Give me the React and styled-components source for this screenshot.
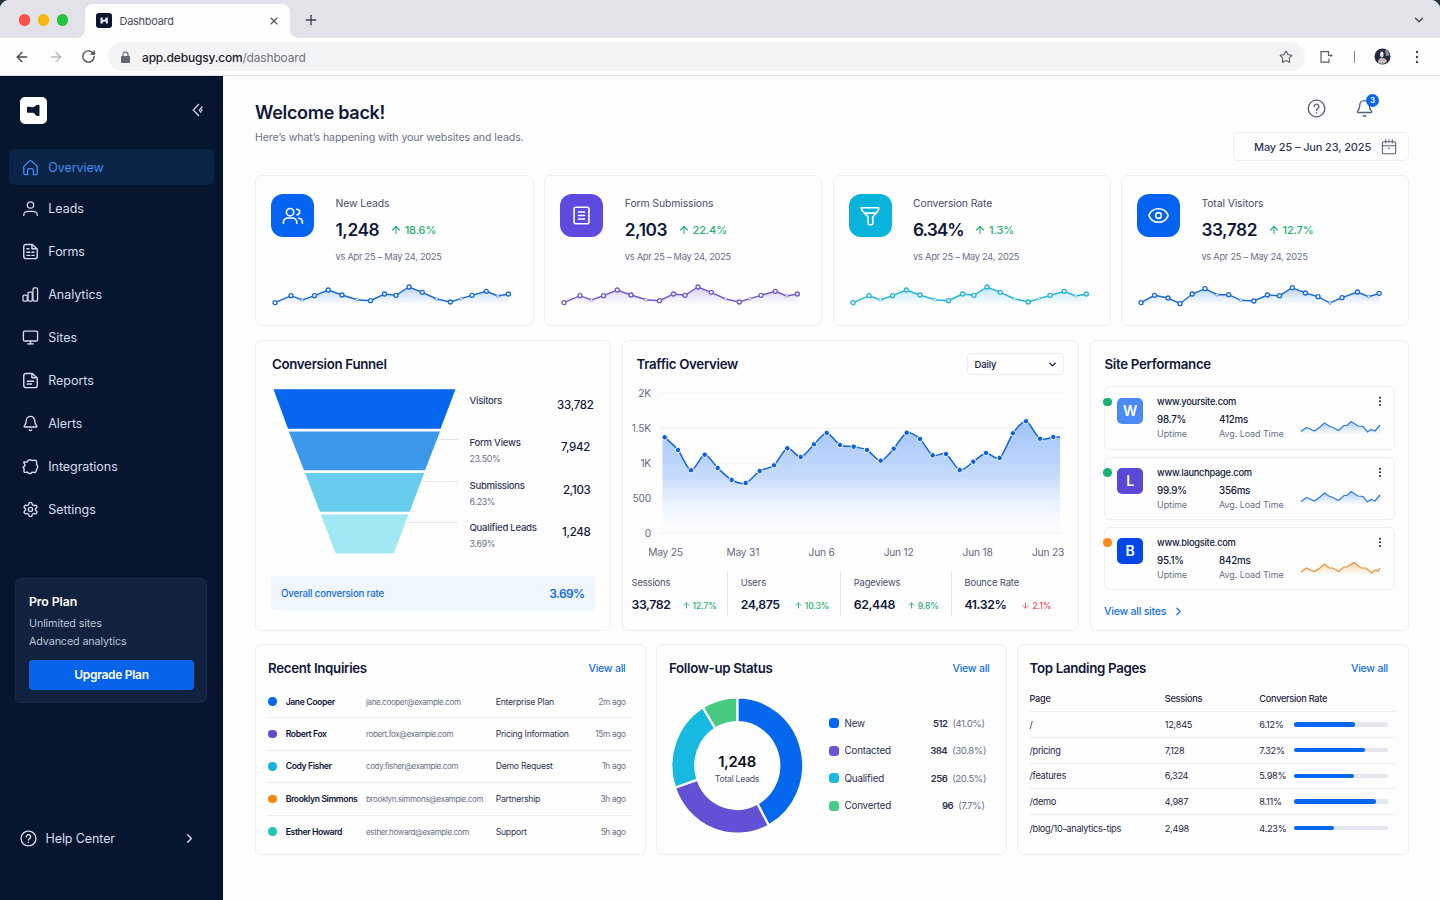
import styled, { createGlobalStyle } from "styled-components";
import {
  ArrowDown,
  ArrowLeft,
  ArrowRight,
  ArrowUp,
  Bell,
  ChevronDown,
  ChevronRight,
  Eye,
  Monitor,
  Plus,
  RotateCw,
  Settings,
  Star,
  X,
} from "lucide-react";

const blue = "#0566ee";
const violet = "#6656d8";
const cyan = "#18b9e0";
const ink = "#10183a";
const muted = "#6a7188";
const line = "#eceef3";

const GlobalStyle = createGlobalStyle`
  * {
    box-sizing: border-box;
  }
  body {
    margin: 0;
    background: #20303a;
    font-family: Inter, "Liberation Sans", sans-serif;
    color: ${ink};
    overflow: hidden;
  }
  svg {
    display: block;
    flex: none;
  }
`;

const Window = styled.div`
  width: 1440px;
  height: 900px;
  display: flex;
  flex-direction: column;
  border-radius: 9px 9px 0 0;
  overflow: hidden;
  background: #fefefe;
`;

/* browser chrome */

const TabStrip = styled.div`
  display: flex;
  align-items: center;
  height: 38px;
  flex: none;
  padding: 2px 14px 0 19px;
  background: #e2e3e8;
`;

const Lights = styled.div`
  display: flex;
  gap: 7.4px;
  width: 66px;
`;

const Light = styled.span`
  width: 11.4px;
  height: 11.4px;
  border-radius: 50%;
  background: ${(props) => props.$color};
`;

const Tab = styled.div`
  position: relative;
  display: flex;
  align-items: center;
  align-self: flex-end;
  width: 205px;
  height: 34px;
  padding: 0 10px 1px 11px;
  border-radius: 8px 8px 0 0;
  background: #fefefe;
  font-size: 11px;
  letter-spacing: -0.28px;
  color: #4b4f59;

  &::before,
  &::after {
    content: "";
    position: absolute;
    bottom: 0;
    width: 8px;
    height: 8px;
  }
  &::before {
    left: -8px;
    background: radial-gradient(circle at 0 0, transparent 7.5px, #fefefe 8px);
  }
  &::after {
    right: -8px;
    background: radial-gradient(circle at 100% 0, transparent 7.5px, #fefefe 8px);
  }
`;

const TabTitle = styled.span`
  flex: 1;
  margin-left: 7.5px;
`;

const NewTab = styled.div`
  flex: 1;
  padding: 0 0 0 13px;
  color: #3c404a;
`;

const Toolbar = styled.div`
  display: flex;
  align-items: center;
  height: 38px;
  flex: none;
  padding: 0 21px 0 14px;
  border-bottom: 1px solid #dfe0e4;
  color: #45484f;
`;

const NavButtons = styled.div`
  display: flex;
  gap: 17.5px;
  width: 94px;
`;

const Address = styled.div`
  display: flex;
  align-items: center;
  width: 1197px;
  height: 29px;
  padding: 1px 12px 0;
  border-radius: 15px;
  background: #f3f4f5;
  font-size: 12px;
  letter-spacing: -0.18px;
  color: #70737b;

  b {
    font-weight: 500;
    color: #1d2027;
  }
  span {
    flex: 1;
    margin-left: 11px;
  }
`;

const ToolIcons = styled.div`
  flex: 1;
  display: flex;
  align-items: center;
  padding-left: 14px;

  svg:last-child {
    margin-left: auto;
  }
`;

const Divider = styled.i`
  width: 1px;
  height: 12px;
  margin: 0 19px 0 20px;
  background: #85878e;
`;

/* sidebar */

const Body = styled.div`
  flex: 1;
  display: flex;
  min-height: 0;
`;

const Sidebar = styled.aside`
  width: 222.5px;
  flex: none;
  display: flex;
  flex-direction: column;
  padding: 20px 8.5px 43px 9px;
  background: #06162f;
  color: #d5deef;
`;

const SideHead = styled.div`
  display: flex;
  justify-content: space-between;
  align-items: center;
  height: 28px;
  margin-bottom: 25px;
  padding: 0 10px 0 11px;
`;

const NavItem = styled.div`
  display: flex;
  align-items: center;
  gap: 9.3px;
  height: 36px;
  margin-bottom: ${(props) => (props.$active ? 5.8 : 6.9)}px;
  padding-left: 13px;
  border-radius: 6px;
  font-size: 12.5px;
  letter-spacing: -0.05px;
  background: ${(props) => (props.$active ? "#0a2447" : "none")};
  color: ${(props) => (props.$active ? "#3f8ff5" : "#d5deef")};
`;

const Plan = styled.div`
  width: 192px;
  height: 125px;
  margin: 43.7px 0 0 6px;
  padding: 14px 12px 0 13px;
  border: 1px solid #1a2b45;
  border-radius: 6px;
  background: #10223d;
  font-size: 10.8px;
  line-height: 18px;
  letter-spacing: -0.14px;
  color: #b9c4d9;

  h4 {
    margin: 0 0 5px;
    font-size: 12.3px;
    font-weight: 600;
    line-height: 17px;
    letter-spacing: -0.1px;
    color: #fff;
  }
`;

const Upgrade = styled.div`
  height: 30px;
  margin-top: 9px;
  border-radius: 4px;
  background: #0763ea;
  font-size: 12px;
  font-weight: 600;
  line-height: 30px;
  letter-spacing: -0.3px;
  text-align: center;
  color: #fff;
`;

const Help = styled.div`
  display: flex;
  align-items: center;
  gap: 8.5px;
  margin-top: auto;
  padding: 0 17px 10px 11px;
  font-size: 12.5px;
  letter-spacing: -0.1px;

  span {
    flex: 1;
  }
`;

/* page */

const Main = styled.main`
  flex: 1;
  padding: 20px 31px 0 32.5px;
`;

const PageHead = styled.header`
  display: flex;
  justify-content: space-between;
  height: 79px;

  h1 {
    margin: 5px 0 0;
    font-size: 18px;
    font-weight: 600;
    line-height: 24px;
    letter-spacing: -0.3px;
  }
  p {
    margin: 4.5px 0 0;
    font-size: 10.6px;
    line-height: 15px;
    letter-spacing: -0.09px;
    color: ${muted};
  }
`;

const HeadTools = styled.div`
  width: 176px;
`;

const HeadIcons = styled.div`
  display: flex;
  align-items: center;
  gap: 29.5px;
  height: 24px;
  margin-bottom: 12px;
  padding-left: 73.5px;
  color: #565e7a;
`;

const BellWrap = styled.div`
  position: relative;
`;

const Badge = styled.span`
  position: absolute;
  top: -5px;
  right: -5px;
  width: 13px;
  height: 13px;
  border-radius: 50%;
  background: ${blue};
  font-size: 8px;
  font-weight: 600;
  line-height: 13px;
  text-align: center;
  color: #fff;
`;

const DateBox = styled.div`
  display: flex;
  align-items: center;
  justify-content: space-between;
  height: 29px;
  padding: 0 11px 0 20px;
  border: 1px solid ${line};
  border-radius: 5px;
  font-size: 11px;
  font-weight: 500;
  letter-spacing: -0.13px;
  color: #303858;

  svg {
    color: #565e7a;
  }
`;

const Row = styled.section`
  display: grid;
  grid-template-columns: ${(props) => props.$cols};
  gap: ${(props) => props.$gap}px;
  height: ${(props) => props.$height}px;
  margin-bottom: ${(props) => props.$after || 0}px;
`;

const Card = styled.div`
  min-width: 0;
  padding: ${(props) => props.$pad || "0"};
  border: 1px solid ${line};
  border-radius: 7px;
  background: #fefefe;
`;

const Title = styled.h2`
  margin: 0 0 0 ${(props) => props.$indent || 0}px;
  font-size: 13.3px;
  font-weight: 600;
  line-height: 18px;
  letter-spacing: -0.32px;
  white-space: nowrap;
`;

const CardHead = styled.div`
  display: flex;
  justify-content: space-between;
  align-items: center;
  height: 22px;
  margin-bottom: ${(props) => props.$after || 0}px;
  padding-right: ${(props) => props.$right || 0}px;
`;

const LinkText = styled.span`
  font-size: 10.5px;
  font-weight: 500;
  letter-spacing: -0.22px;
  color: #1670ee;
`;

/* stat cards */

const StatTop = styled.div`
  display: flex;
  gap: 21.5px;
  margin-bottom: 16px;
`;

const Tile = styled.div`
  display: grid;
  place-items: center;
  width: 43px;
  height: 43px;
  border-radius: 12px;
  background: ${(props) => props.$color};
  color: #fff;
`;

const StatText = styled.div`
  padding-top: 2px;
  font-size: 10.4px;
  line-height: 15px;
  letter-spacing: -0.1px;
  color: #454d6b;

  small {
    display: block;
    font-size: 9.3px;
    line-height: 14px;
    letter-spacing: -0.28px;
    color: ${muted};
  }
`;

const StatValue = styled.div`
  display: flex;
  align-items: center;
  height: 24px;
  margin: 6px 0 9px;
  font-size: 17.3px;
  font-weight: 600;
  letter-spacing: ${(props) => (props.$tight ? -1 : -0.45)}px;
  color: ${ink};
`;

const Change = styled.span`
  display: flex;
  align-items: center;
  gap: ${(props) => (props.$big ? 3 : 2)}px;
  margin-left: ${(props) => props.$left}px;
  padding-top: 2px;
  font-size: ${(props) => (props.$big ? 11 : 8.6)}px;
  font-weight: 500;
  letter-spacing: -0.12px;
  color: ${(props) => (props.$down ? "#ee4f55" : "#22b06d")};
`;

/* funnel */

const FunnelBody = styled.div`
  display: flex;
  height: 201px;
  padding-top: 14px;
`;

const Steps = styled.div`
  flex: 1;
  margin: 4.5px 0 0 9.5px;
`;

const Step = styled.div`
  display: flex;
  justify-content: space-between;
  height: 42.5px;
  padding-right: ${(props) => props.$right}px;
  font-size: 9.6px;
  font-weight: 500;
  line-height: 14px;
  letter-spacing: -0.28px;
  color: #333b5b;

  small {
    display: block;
    margin-top: 2px;
    font-size: 8.8px;
    font-weight: 400;
    color: ${muted};
  }
  strong {
    padding-top: 4px;
    font-size: 11.5px;
    font-weight: 500;
    letter-spacing: -0.3px;
    color: ${ink};
  }
`;

const Overall = styled.div`
  display: flex;
  align-items: center;
  justify-content: space-between;
  height: 34px;
  padding: 0 10px;
  border-radius: 4px;
  background: #eff6fe;
  font-size: 9.7px;
  font-weight: 500;
  letter-spacing: -0.18px;
  color: #176ce4;

  strong {
    font-size: 12px;
    font-weight: 600;
    letter-spacing: -0.6px;
  }
`;

/* traffic */

const Select = styled.div`
  display: flex;
  align-items: center;
  justify-content: space-between;
  width: 97px;
  height: 22px;
  padding: 0 5px 0 7px;
  border: 1px solid ${line};
  border-radius: 4px;
  font-size: 9.5px;
  font-weight: 500;
  letter-spacing: -0.15px;
`;

const ChartBox = styled.div`
  height: 197px;
  padding-top: 9.5px;
`;

const ChartText = styled.text`
  font-size: 10.2px;
  letter-spacing: -0.2px;
  fill: #646b82;
  text-anchor: ${(props) => props.$anchor};
`;

const Totals = styled.div`
  display: grid;
  grid-template-columns: 95.7px 113px 110.7px 1fr;
  height: 44px;
`;

const Total = styled.div`
  padding: 4px 0 0 ${(props) => (props.$first ? 0 : 12.5)}px;
  border-left: ${(props) => (props.$first ? "0" : "1px solid #e3e5ec")};
  font-size: 9.4px;
  line-height: 14px;
  letter-spacing: -0.12px;
  color: #454d6b;

  div {
    display: flex;
    align-items: center;
    height: 22px;
    margin-top: 3.5px;
  }
  strong {
    width: ${(props) => props.$value}px;
    font-size: 12.3px;
    font-weight: 600;
    letter-spacing: -0.4px;
    color: ${ink};
  }
`;

/* sites */

const Site = styled.div`
  display: flex;
  width: 291px;
  height: 63.4px;
  margin-bottom: 6.9px;
  padding-top: 9px;
  border: 1px solid ${line};
  border-radius: 6px;
`;

const Status = styled.i`
  width: 8.6px;
  height: 8.6px;
  margin: 1.5px 5.5px 0 -2px;
  border-radius: 50%;
  flex: none;
  background: ${(props) => props.$color};
`;

const Letter = styled.div`
  width: 26px;
  height: 26px;
  margin: 1.5px 14px 0 0;
  border-radius: 5px;
  background: ${(props) => props.$color};
  font-size: 14px;
  font-weight: 600;
  line-height: 26px;
  text-align: center;
  color: #fff;
`;

const SiteText = styled.div`
  width: 143px;
  margin-top: -1px;
  font-size: 9.3px;
  font-weight: 500;
  line-height: 13px;
  letter-spacing: -0.26px;

  dl {
    display: grid;
    grid-template-columns: 62px 1fr;
    margin: 5px 0 0;
    line-height: 14px;
  }
  dt {
    font-size: 9.8px;
  }
  dd {
    margin: 0;
    font-size: 9px;
    font-weight: 400;
    letter-spacing: -0.1px;
    white-space: nowrap;
    color: ${muted};
  }
`;

const SiteEnd = styled.div`
  display: flex;
  flex-direction: column;
  align-items: flex-end;
  gap: 12.5px;
`;

const AllSites = styled(LinkText)`
  display: flex;
  align-items: center;
  gap: 6px;
  padding-top: 8px;
`;

/* inquiries */

const Inquiry = styled.div`
  display: grid;
  grid-template-columns: 17.7px 80.3px 129.7px 84px 46px;
  align-items: center;
  height: 32.4px;
  border-bottom: ${(props) => (props.$last ? "0" : `1px solid ${line}`)};
  font-size: 8.7px;
  letter-spacing: -0.26px;
  white-space: nowrap;
  color: #2d3452;

  i {
    width: 8.6px;
    height: 8.6px;
    border-radius: 50%;
    background: ${(props) => props.$color};
  }
  b {
    font-weight: 600;
    letter-spacing: -0.42px;
    color: ${ink};
  }
  em {
    font-style: normal;
    font-size: 8px;
    letter-spacing: -0.37px;
    color: ${muted};
  }
  em:last-child {
    font-size: 8.4px;
    text-align: right;
  }
`;

/* follow-up */

const FollowBody = styled.div`
  display: flex;
  align-items: center;
  height: 154px;
  padding-top: 2px;
`;

const Donut = styled.div`
  display: grid;
  width: 131px;
  height: 135px;
  margin: 17px 26px 0 3px;

  > * {
    grid-area: 1 / 1;
  }
`;

const DonutLabel = styled.div`
  align-self: center;
  padding-top: 7px;
  font-size: 8.8px;
  line-height: 14px;
  letter-spacing: -0.32px;
  text-align: center;
  color: #4f5672;

  strong {
    display: block;
    font-size: 14.8px;
    font-weight: 600;
    line-height: 20px;
    color: #0b0f20;
  }
`;

const Legend = styled.div`
  flex: 1;
  padding-top: 15px;
`;

const LegendItem = styled.div`
  display: flex;
  align-items: center;
  height: 27.6px;
  padding-right: ${(props) => props.$right}px;
  font-size: 9.8px;
  letter-spacing: -0.2px;
  color: #2a3150;

  i {
    width: 10px;
    height: 10px;
    margin-right: 6px;
    border-radius: 3.5px;
    background: ${(props) => props.$color};
  }
  span {
    flex: 1;
  }
  b {
    font-size: 9.5px;
    font-weight: 600;
    letter-spacing: -0.5px;
  }
  em {
    margin-left: 5px;
    font-style: normal;
    font-size: 9.6px;
    letter-spacing: -0.4px;
    color: ${muted};
  }
`;

/* landing pages */

const PageRow = styled.div`
  display: grid;
  grid-template-columns: 135.3px 94.5px 34.5px 94px;
  align-items: center;
  height: ${(props) => (props.$head ? 27 : 25.8)}px;
  border-bottom: ${(props) => (props.$last ? "0" : `1px solid ${line}`)};
  font-size: 9.2px;
  font-weight: ${(props) => (props.$head ? 500 : 400)};
  letter-spacing: -0.28px;
  white-space: nowrap;
  color: #1e2644;
`;

const Track = styled.div`
  height: 4.6px;
  border-radius: 3px;
  background: #e5e7ec;
`;

const Fill = styled.div`
  height: 100%;
  border-radius: 3px;
  background: ${blue};
`;

function Icon({ size, width = 1.8, children }) {
  return (
    <svg
      width={size}
      height={size}
      viewBox="0 0 24 24"
      fill="none"
      stroke="currentColor"
      strokeWidth={width}
      strokeLinecap="round"
      strokeLinejoin="round"
    >
      {children}
    </svg>
  );
}

const HomeIcon = () => (
  <Icon size={17}>
    <path d="M2.500 10.500 10 3.300c1.300-1.200 2.700-1.200 4 0l7.500 7.200V20a2 2 0 0 1-2 2H16v-6.500a2 2 0 0 0-2-2h-4a2 2 0 0 0-2 2V22H4.500a2 2 0 0 1-2-2z" />
  </Icon>
);

const PersonIcon = () => (
  <Icon size={17}>
    <circle cx="12" cy="7" r="4.500" />
    <path d="M2.500 22v-.500c0-3.500 3-5.500 6-5.500h7c3 0 6 2 6 5.500v.5" />
  </Icon>
);

const DocIcon = ({ form }) => (
  <Icon size={17} width={2}>
    <path d="M14.500 2H5.500a3 3 0 0 0-3 3v14a3 3 0 0 0 3 3h13a3 3 0 0 0 3-3V8.500z" />
    <path d="M14 2.500V8h6" />
    {form ? (
      <path d="M7 8h3M7 13h4M14 13h3M7 17.500h4M14 17.500h3" />
    ) : (
      <path d="M7.500 13h9M7.500 17h6" />
    )}
  </Icon>
);

const BarsIcon = () => (
  <Icon size={17}>
    <rect x="1.500" y="13" width="6" height="8.500" rx="1.500" />
    <rect x="8.500" y="8.500" width="6" height="13" rx="1.500" />
    <rect x="15.500" y="2.500" width="6.500" height="19" rx="2" />
  </Icon>
);

const PieceIcon = () => (
  <Icon size={17} width={2}>
    <path d="M2.500 5.500c1.800.5 3.500.3 5.500-.5.500-2 1.800-3 3.500-2.500 1.200.3 1.800 1.200 3.500 1 2-.3 3.500-.8 5 .5 1.300 1.500.5 3.200.5 5 .3 1 1.700 1.500 1.700 3.500s-1.400 2.500-1.700 3.700c-.3 1.600 0 3-1.500 4-1.500.8-3-.2-4.500 0-1.300.3-1.600 1.800-3.500 1.800s-2.200-1.500-3.500-1.800c-1.500-.3-3.500.8-4.500-.7-.8-1.500.3-2.700 0-4-.2-1-1.500-1.500-1.500-3 1.800-.3 2.700-1.300 2.500-3-.2-1.300-1.500-2-1.500-4z" />
  </Icon>
);

const HelpIcon = ({ size, width }) => (
  <Icon size={size} width={width}>
    <circle cx="12" cy="12" r="10.500" />
    <path d="M9 9.500a3 3 0 1 1 4.500 2.600c-1 .6-1.500 1.100-1.500 2.100" />
    <path d="M12 17.300v.1" />
  </Icon>
);

const PeopleIcon = () => (
  <Icon size={22}>
    <circle cx="8.800" cy="7.800" r="4" />
    <path d="M1.500 20v-1c0-3 2.500-4.800 5-4.800h4.600c2.500 0 5 1.800 5 4.800v1" />
    <path d="M16 4.700a3 3 0 1 1 .5 6M18.300 14.500c2.400.3 4 2 4 4.500v1" />
  </Icon>
);

const SheetIcon = () => (
  <Icon size={21}>
    <rect x="3.500" y="2.500" width="17" height="19" rx="2" />
    <path d="M8.500 8h7M8.500 12h7M8.500 16h7" />
  </Icon>
);

const FunnelIcon = () => (
  <Icon size={22}>
    <path d="M2.500 3h19c.3 1.500-.5 3-1.500 4.200L15 13v7c0 1-.5 1.500-1.500 1.500h-2c-1 0-1.500-.5-1.500-1.500v-7L4.500 7.200C3.300 6 2.300 4.500 2.500 3z" />
    <path d="M6 8.800h13" />
  </Icon>
);

const CalendarIcon = () => (
  <Icon size={16} width={1.6}>
    <rect x="2" y="4" width="20" height="18" rx="2" />
    <path d="M2 10h20M7 1v5M12 1v3M17 1v5M11 14h2" />
  </Icon>
);

const LogoMark = ({ small }) =>
  small ? (
    <svg width="16" height="15" viewBox="0 0 16 15">
      <rect width="16" height="15" rx="3" fill="#0b1730" />
      <path d="M4.500 4.500h2v2.200h2.200l1.300-2.200h1.800v6H9.800V8.600H7.500l-1 1.900h-2z" fill="#e8edf6" />
    </svg>
  ) : (
    <svg width="27" height="27" viewBox="0 0 27 27">
      <rect width="27" height="27" rx="5" fill="#fff" />
      <path
        d="M8 9.700h1.500c1.300 0 1.500.6 2.700.6 1.300 0 1.900-.3 2.700-1l1.100-.9c.4-.4.800-.6 1.500-.6h1c.7 0 1 .3 1 1v9.200c0 .7-.3 1-1 1h-.8c-.7 0-1-.1-1.500-.6l-1.700-1.700c-.8-.8-1.200-.9-2.300-.9H8c-.7 0-1-.3-1-1v-4.100c0-.7.300-1 1-1z"
        fill="#0a1733"
      />
    </svg>
  );

const CollapseIcon = () => (
  <svg width="12" height="14" viewBox="0 0 12 14" fill="none" stroke="currentColor" strokeWidth="1.200">
    <path d="M7 1 1.200 7 7 13M10.500 3.500 7.300 7l1.800 2.800M9.800 6v2.500" />
  </svg>
);

const Kebab = () => (
  <svg width="4" height="11" viewBox="0 0 4 11" fill="currentColor">
    <circle cx="2" cy="1.700" r="1" />
    <circle cx="2" cy="5.300" r="1" />
    <circle cx="2" cy="8.900" r="1" />
  </svg>
);

const nav = [
  ["Overview", <HomeIcon />],
  ["Leads", <PersonIcon />],
  ["Forms", <DocIcon form />],
  ["Analytics", <BarsIcon />],
  ["Sites", <Monitor size={17} strokeWidth={1.9} />],
  ["Reports", <DocIcon />],
  ["Alerts", <Bell size={17} strokeWidth={1.9} />],
  ["Integrations", <PieceIcon />],
  ["Settings", <Settings size={17} strokeWidth={1.9} />],
];

// x, y, and 1 where the marker is a small faded one
const wave = [
  [4, 22.7], [20, 15.7], [31.4, 20, 1], [43.5, 15.7], [57.3, 10], [71, 15],
  [86, 19.7, 1], [99.5, 20.7], [113.5, 14], [125, 15.3], [138, 7], [151.3, 12.3],
  [165.6, 19, 1], [179.3, 22], [190, 18.7, 1], [201, 15.3], [215.3, 11.3],
  [226.7, 16, 1], [237.4, 14],
];

const visitorWave = [
  [4, 22.7], [17.5, 15.3], [31, 18], [43, 23.7], [55.2, 14], [68, 8.7],
  [80, 14.7, 1], [91.7, 14.7], [103.7, 20.3, 1], [116.9, 21], [130.4, 15],
  [142.5, 15.7], [155.3, 7.7], [168.4, 13], [181, 16.7], [193, 23, 1],
  [205, 17.7], [220.4, 12], [231.7, 16.7, 1], [242.2, 13.3],
];

const stats = [
  { label: "New Leads", value: "1,248", change: "18.6%", color: "#0463f0", icon: <PeopleIcon />, points: wave },
  { label: "Form Submissions", value: "2,103", change: "22.4%", color: "#5d4be0", stroke: "#7257d3", icon: <SheetIcon />, points: wave },
  { label: "Conversion Rate", value: "6.34%", change: "1.3%", color: "#08b4dc", stroke: "#1fb3dc", icon: <FunnelIcon />, points: wave, tight: true },
  { label: "Total Visitors", value: "33,782", change: "12.7%", color: "#0463f0", icon: <Eye size={23} strokeWidth={1.7} />, points: visitorWave },
];

const steps = [
  ["Visitors", "", "33,782", 1],
  ["Form Views", "23.50%", "7,942", 4.5],
  ["Submissions", "6.23%", "2,103", 4],
  ["Qualified Leads", "3.69%", "1,248", 4],
];

const traffic = [
  [8.7, 52.3], [22, 65], [35, 85.3], [48.7, 69.7], [61.7, 83], [75.7, 95], [89.7, 98],
  [103.7, 86], [118, 80.3], [131.3, 63.3], [144.7, 72], [158, 59.3], [170.7, 48],
  [184, 60], [197.7, 61.7], [211, 65], [224.7, 75.7], [237.7, 63.7], [250.7, 47.7],
  [264, 54], [276.7, 70.3], [290, 69], [303.7, 85], [317.3, 76.7], [330, 68],
  [343.7, 73], [357, 48.3], [370, 36.3], [384, 53.7], [397.3, 52], [404, 52],
];

const trafficDates = [
  ["May 25", 9.5],
  ["May 31", 86.8],
  ["Jun 6", 165.6],
  ["Jun 12", 242.6],
  ["Jun 18", 321.6],
  ["Jun 23", 392],
];

const totals = [
  ["Sessions", "33,782", "12.7%", 50],
  ["Users", "24,875", "10.3%", 53],
  ["Pageviews", "62,448", "9.8%", 53],
  ["Bounce Rate", "41.32%", "2.1%", 57],
];

const siteWave = "1,11.5 6.5,7.5 10,9 14.5,11 20,7 24.5,3 29,6 33,7.5 38.5,10.5 44,5.5 47,5.5 51,1.5 58,6 63,6.5 67.5,12 71,9.5 75,11 80,5";
const blogWave = "1,12 6.5,8 10,10 14.5,11.5 20,8 24.5,4 29,8 33,8 38.5,11.5 44,7 47,7 54,2.5 61,8 66,8 71.5,13 75,10 78,11 80,8";

const sites = [
  ["www.yoursite.com", "W", "98.7%", "412ms", "#4b8af5", "#17b179", siteWave, "#2a7ae6"],
  ["www.launchpage.com", "L", "99.9%", "356ms", "#5a49d6", "#17b179", siteWave, "#2a7ae6"],
  ["www.blogsite.com", "B", "95.1%", "842ms", "#0348e6", "#fd8917", blogWave, "#f08c2a"],
];

const inquiries = [
  ["Jane Cooper", "jane.cooper@example.com", "Enterprise Plan", "2m ago", blue],
  ["Robert Fox", "robert.fox@example.com", "Pricing Information", "15m ago", "#5f4bd4"],
  ["Cody Fisher", "cody.fisher@example.com", "Demo Request", "1h ago", "#12b3e2"],
  ["Brooklyn Simmons", "brooklyn.simmons@example.com", "Partnership", "3h ago", "#fb860f"],
  ["Esther Howard", "esther.howard@example.com", "Support", "5h ago", "#25c4b0"],
];

const statuses = [
  ["New", "512", "(41.0%)", blue, 9],
  ["Contacted", "384", "(30.8%)", violet, 7.5],
  ["Qualified", "256", "(20.5%)", cyan, 7.5],
  ["Converted", "96", "(7.7%)", "#45cb83", 9],
];

const pages = [
  ["/", "12,845", "6.12%", 65],
  ["/pricing", "7,128", "7.32%", 76],
  ["/features", "6,324", "5.98%", 64],
  ["/demo", "4,987", "8.11%", 87],
  ["/blog/10-analytics-tips", "2,498", "4.23%", 43],
];

function smooth(points) {
  let d = `M${points[0][0]} ${points[0][1]}`;
  for (let i = 0; i < points.length - 1; i++) {
    const a = points[Math.max(i - 1, 0)];
    const b = points[i];
    const c = points[i + 1];
    const e = points[Math.min(i + 2, points.length - 1)];
    d += ` C${b[0] + (c[0] - a[0]) / 7} ${b[1] + (c[1] - a[1]) / 7} ${c[0] - (e[0] - b[0]) / 7} ${c[1] - (e[1] - b[1]) / 7} ${c[0]} ${c[1]}`;
  }
  return d;
}

function Spark({ id, points, color }) {
  const path = points.map((p) => `${p[0]},${p[1]}`).join(" ");
  const end = points[points.length - 1][0];
  return (
    <svg width="246" height="34" viewBox="0 0 246 34">
      <defs>
        <linearGradient id={id} x1="0" y1="0" x2="0" y2="1">
          <stop offset="0" stopColor={color} stopOpacity="0.28" />
          <stop offset="0.85" stopColor={color} stopOpacity="0" />
        </linearGradient>
      </defs>
      <polygon points={`4,28 ${path} ${end},28`} fill={`url(#${id})`} />
      <polyline points={path} fill="none" stroke={color} strokeWidth="1.4" />
      {points.map(([x, y, faint]) => (
        <circle
          key={x}
          cx={x}
          cy={y}
          r={faint ? 1.4 : 2}
          fill="#fefefe"
          stroke={color}
          strokeOpacity={faint ? 0.6 : 1}
          strokeWidth={faint ? 0.9 : 1.3}
        />
      ))}
    </svg>
  );
}

function Funnel() {
  return (
    <svg width="189" height="170" viewBox="0 0 189 170">
      <g stroke="#e2e6ee">
        <path d="M180 8.500h7M168 50.500h19M152 92.500h35M136 133.500h51" />
      </g>
      <path d="M2.500.3h182l-15 39.500H17z" fill="#0567ef" />
      <path d="M17.800 42.500h151.200l-15 38.700H33z" fill="#3c98ea" />
      <path d="M34 84h119.300l-14.700 38.800H49z" fill="#67cdec" />
      <path d="M49.800 125.500h87.700L122.700 164.500h-58z" fill="#a0e8f4" />
    </svg>
  );
}

function TrafficChart() {
  const curve = smooth(traffic);
  return (
    <svg width="440" height="184" viewBox="-24 0 440 184">
      <defs>
        <linearGradient id="traffic" x1="0" y1="0" x2="0" y2="1">
          <stop offset="0" stopColor="#8db7fa" stopOpacity="0.85" />
          <stop offset="0.5" stopColor="#a9c9fb" stopOpacity="0.65" />
          <stop offset="1" stopColor="#f2f7fe" stopOpacity="0.1" />
        </linearGradient>
      </defs>
      {["2K", "1.5K", "1K", "500", "0"].map((label, i) => (
        <g key={label}>
          <path d={`M4 ${8.2 + i * 35}h402`} stroke="#eff1f5" />
          <ChartText $anchor="end" x="-5" y={11.8 + i * 35}>
            {label}
          </ChartText>
        </g>
      ))}
      <path d={`${curve} L404 148.200 L6.500 148.200 L6.500 52z`} fill="url(#traffic)" />
      <path d={curve} fill="none" stroke="#1265dd" strokeWidth="1.5" />
      {traffic.slice(0, -1).map(([x, y]) => (
        <circle key={x} cx={x} cy={y} r="2.700" fill="#0c5fdd" stroke="#fff" strokeWidth="0.9" />
      ))}
      {trafficDates.map(([label, x]) => (
        <ChartText key={label} $anchor="middle" x={x} y="170.8">
          {label}
        </ChartText>
      ))}
    </svg>
  );
}

function Ring() {
  const slices = [
    [0, 151.5, blue],
    [151.5, 251, "#6151d4"],
    [251, 328.5, cyan],
    [328.5, 360, "#48c981"],
  ];
  const at = (deg, r) => {
    const t = ((deg - 90) * Math.PI) / 180;
    return `${65.3 + r * Math.cos(t)} ${67.5 + r * 1.033 * Math.sin(t)}`;
  };
  return (
    <svg width="131" height="135" viewBox="0 0 131 135">
      {slices.map(([from, to, color]) => (
        <path
          key={color}
          d={`M${at(from, 66)} A66 68.200 0 0 1 ${at(to, 66)} L${at(to, 42)} A42 43.400 0 0 0 ${at(from, 42)}z`}
          fill={color}
          stroke="#fefefe"
          strokeWidth="2.2"
        />
      ))}
    </svg>
  );
}

function Browser() {
  return (
    <>
      <TabStrip>
        <Lights>
          <Light $color="#fb5049" />
          <Light $color="#f8b710" />
          <Light $color="#23c540" />
        </Lights>
        <Tab>
          <LogoMark small />
          <TabTitle>Dashboard</TabTitle>
          <X size={12} strokeWidth={2.2} />
        </Tab>
        <NewTab>
          <Plus size={16} strokeWidth={2} />
        </NewTab>
        <ChevronDown size={14} strokeWidth={2.3} color="#40444c" />
      </TabStrip>
      <Toolbar>
        <NavButtons>
          <ArrowLeft size={16} strokeWidth={2} />
          <ArrowRight size={16} strokeWidth={2} color="#b7b9be" />
          <RotateCw size={15} strokeWidth={2.1} />
        </NavButtons>
        <Address>
          <svg width="11" height="13" viewBox="0 0 11 13">
            <rect x="1" y="5" width="9" height="7" rx="1" fill="#65686f" />
            <path d="M3 5.500V3.600a2.500 2.500 0 0 1 5 0v1.900" fill="none" stroke="#65686f" strokeWidth="1.2" />
          </svg>
          <span>
            <b>app.debugsy.com</b>/dashboard
          </span>
          <Star size={14} strokeWidth={1.8} color="#55585f" />
        </Address>
        <ToolIcons>
          <svg width="15" height="14" viewBox="0 0 15 14" fill="none" stroke="#5a5d65" strokeWidth="1.2">
            <path d="M9.500 4V1.600H2v10.500h8V8.500M9.500 3.500V5.500H11.500" />
            <path d="M11.300 3.800 13.800 5.500 11.300 7.200z" fill="#5a5d65" stroke="none" />
          </svg>
          <Divider />
          <svg width="17" height="17" viewBox="0 0 17 17">
            <circle cx="8.500" cy="8.500" r="8" fill="#232a3c" />
            <path d="M4 14.800c.3-3.500 1.500-4.800 4-4.800s4.500 1 5 3.500c-2 2.500-6.500 3-9 1.300z" fill="#c9b8b4" />
            <ellipse cx="7.800" cy="6.500" rx="1.800" ry="3" fill="#e8dcd6" />
            <path d="M11 1.500c2.500 1 4.500 3.500 4.500 6L12 8z" fill="#8295ac" />
          </svg>
          <svg width="4" height="14" viewBox="0 0 4 14" fill="#44474f">
            <circle cx="2" cy="2" r="1.200" />
            <circle cx="2" cy="7" r="1.200" />
            <circle cx="2" cy="12" r="1.200" />
          </svg>
        </ToolIcons>
      </Toolbar>
    </>
  );
}

function SideMenu() {
  return (
    <Sidebar>
      <SideHead>
        <LogoMark />
        <CollapseIcon />
      </SideHead>
      {nav.map(([label, icon], i) => (
        <NavItem key={label} $active={i === 0}>
          {icon}
          {label}
        </NavItem>
      ))}
      <Plan>
        <h4>Pro Plan</h4>
        Unlimited sites
        <br />
        Advanced analytics
        <Upgrade>Upgrade Plan</Upgrade>
      </Plan>
      <Help>
        <HelpIcon size={17} width={1.9} />
        <span>Help Center</span>
        <ChevronRight size={15} strokeWidth={2.2} />
      </Help>
    </Sidebar>
  );
}

export default function App() {
  return (
    <Window>
      <GlobalStyle />
      <Browser />
      <Body>
        <SideMenu />
        <Main>
          <PageHead>
            <div>
              <h1>Welcome back!</h1>
              <p>Here’s what’s happening with your websites and leads.</p>
            </div>
            <HeadTools>
              <HeadIcons>
                <HelpIcon size={19} width={1.7} />
                <BellWrap>
                  <Bell size={19} strokeWidth={1.7} />
                  <Badge>3</Badge>
                </BellWrap>
              </HeadIcons>
              <DateBox>
                May 25 – Jun 23, 2025
                <CalendarIcon />
              </DateBox>
            </HeadTools>
          </PageHead>

          <Row $cols="279px 278px 278px 288px" $gap={10.3} $height={150.5} $after={14.5}>
            {stats.map((s, i) => (
              <Card key={s.label} $pad="18px 15px 0">
                <StatTop>
                  <Tile $color={s.color}>{s.icon}</Tile>
                  <StatText>
                    {s.label}
                    <StatValue $tight={s.tight}>
                      {s.value}
                      <Change $big $left={10.5}>
                        <ArrowUp size={12} strokeWidth={2.2} />
                        {s.change}
                      </Change>
                    </StatValue>
                    <small>vs Apr 25 – May 24, 2025</small>
                  </StatText>
                </StatTop>
                <Spark id={`spark${i}`} points={s.points} color={s.stroke || "#1469dd"} />
              </Card>
            ))}
          </Row>

          <Row $cols="355.5px 457px 1fr" $gap={11} $height={290.5} $after={13.5}>
            <Card $pad="12px 15px 0">
              <CardHead>
                <Title $indent={1}>Conversion Funnel</Title>
              </CardHead>
              <FunnelBody>
                <Funnel />
                <Steps>
                  {steps.map(([label, rate, value, right]) => (
                    <Step key={label} $right={right}>
                      <div>
                        {label}
                        <small>{rate}</small>
                      </div>
                      <strong>{value}</strong>
                    </Step>
                  ))}
                </Steps>
              </FunnelBody>
              <Overall>
                Overall conversion rate <strong>3.69%</strong>
              </Overall>
            </Card>

            <Card $pad="12px 9px 0">
              <CardHead $right={5}>
                <Title $indent={5}>Traffic Overview</Title>
                <Select>
                  Daily
                  <ChevronDown size={11} strokeWidth={2.8} />
                </Select>
              </CardHead>
              <ChartBox>
                <TrafficChart />
              </ChartBox>
              <Totals>
                {totals.map(([label, value, change, width], i) => (
                  <Total key={label} $first={i === 0} $value={width}>
                    {label}
                    <div>
                      <strong>{value}</strong>
                      <Change $left={0} $down={i === 3}>
                        {i === 3 ? <ArrowDown size={9} strokeWidth={2.3} /> : <ArrowUp size={9} strokeWidth={2.3} />}
                        {change}
                      </Change>
                    </div>
                  </Total>
                ))}
              </Totals>
            </Card>

            <Card $pad="12px 12px 0 13.5px">
              <CardHead $after={11.3}>
                <Title $indent={0.5}>Site Performance</Title>
              </CardHead>
              {sites.map(([name, letter, uptime, load, tile, dot, points, color], i) => (
                <Site key={name}>
                  <Status $color={dot} />
                  <Letter $color={tile}>{letter}</Letter>
                  <SiteText>
                    {name}
                    <dl>
                      <dt>{uptime}</dt>
                      <dt>{load}</dt>
                      <dd>Uptime</dd>
                      <dd>Avg. Load Time</dd>
                    </dl>
                  </SiteText>
                  <SiteEnd>
                    <Kebab />
                    <svg width="82" height="18" viewBox="0 0 82 18">
                      <defs>
                        <linearGradient id={`site${i}`} x1="0" y1="0" x2="0" y2="1">
                          <stop offset="0" stopColor={color} stopOpacity="0.35" />
                          <stop offset="1" stopColor={color} stopOpacity="0" />
                        </linearGradient>
                      </defs>
                      <polygon points={`1,15 ${points} 80,15`} fill={`url(#site${i})`} />
                      <polyline points={points} fill="none" stroke={color} strokeWidth="1.2" />
                    </svg>
                  </SiteEnd>
                </Site>
              ))}
              <AllSites>
                View all sites <ChevronRight size={13} strokeWidth={2.2} />
              </AllSites>
            </Card>
          </Row>

          <Row $cols="390.5px 351px 1fr" $gap={10} $height={211}>
            <Card $pad="12px 12px 0">
              <CardHead $right={7} $after={7}>
                <Title>Recent Inquiries</Title>
                <LinkText>View all</LinkText>
              </CardHead>
              {inquiries.map(([name, email, subject, when, color], i) => (
                <Inquiry key={name} $color={color} $last={i === 4}>
                  <i />
                  <b>{name}</b>
                  <em>{email}</em>
                  {subject}
                  <em>{when}</em>
                </Inquiry>
              ))}
            </Card>

            <Card $pad="12px 12px 0">
              <CardHead $right={4}>
                <Title $indent={0.5}>Follow-up Status</Title>
                <LinkText>View all</LinkText>
              </CardHead>
              <FollowBody>
                <Donut>
                  <Ring />
                  <DonutLabel>
                    <strong>1,248</strong>
                    Total Leads
                  </DonutLabel>
                </Donut>
                <Legend>
                  {statuses.map(([label, count, share, color, right]) => (
                    <LegendItem key={label} $color={color} $right={right}>
                      <i />
                      <span>{label}</span>
                      <b>{count}</b>
                      <em>{share}</em>
                    </LegendItem>
                  ))}
                </Legend>
              </FollowBody>
            </Card>

            <Card $pad="12px 13px 0 12px">
              <CardHead $right={7} $after={6}>
                <Title>Top Landing Pages</Title>
                <LinkText>View all</LinkText>
              </CardHead>
              <PageRow $head>
                <span>Page</span>
                <span>Sessions</span>
                <span>Conversion Rate</span>
              </PageRow>
              {pages.map(([path, sessions, rate, width], i) => (
                <PageRow key={path} $last={i === 4}>
                  <span>{path}</span>
                  <span>{sessions}</span>
                  <span>{rate}</span>
                  <Track>
                    <Fill style={{ width: `${width}%` }} />
                  </Track>
                </PageRow>
              ))}
            </Card>
          </Row>
        </Main>
      </Body>
    </Window>
  );
}
